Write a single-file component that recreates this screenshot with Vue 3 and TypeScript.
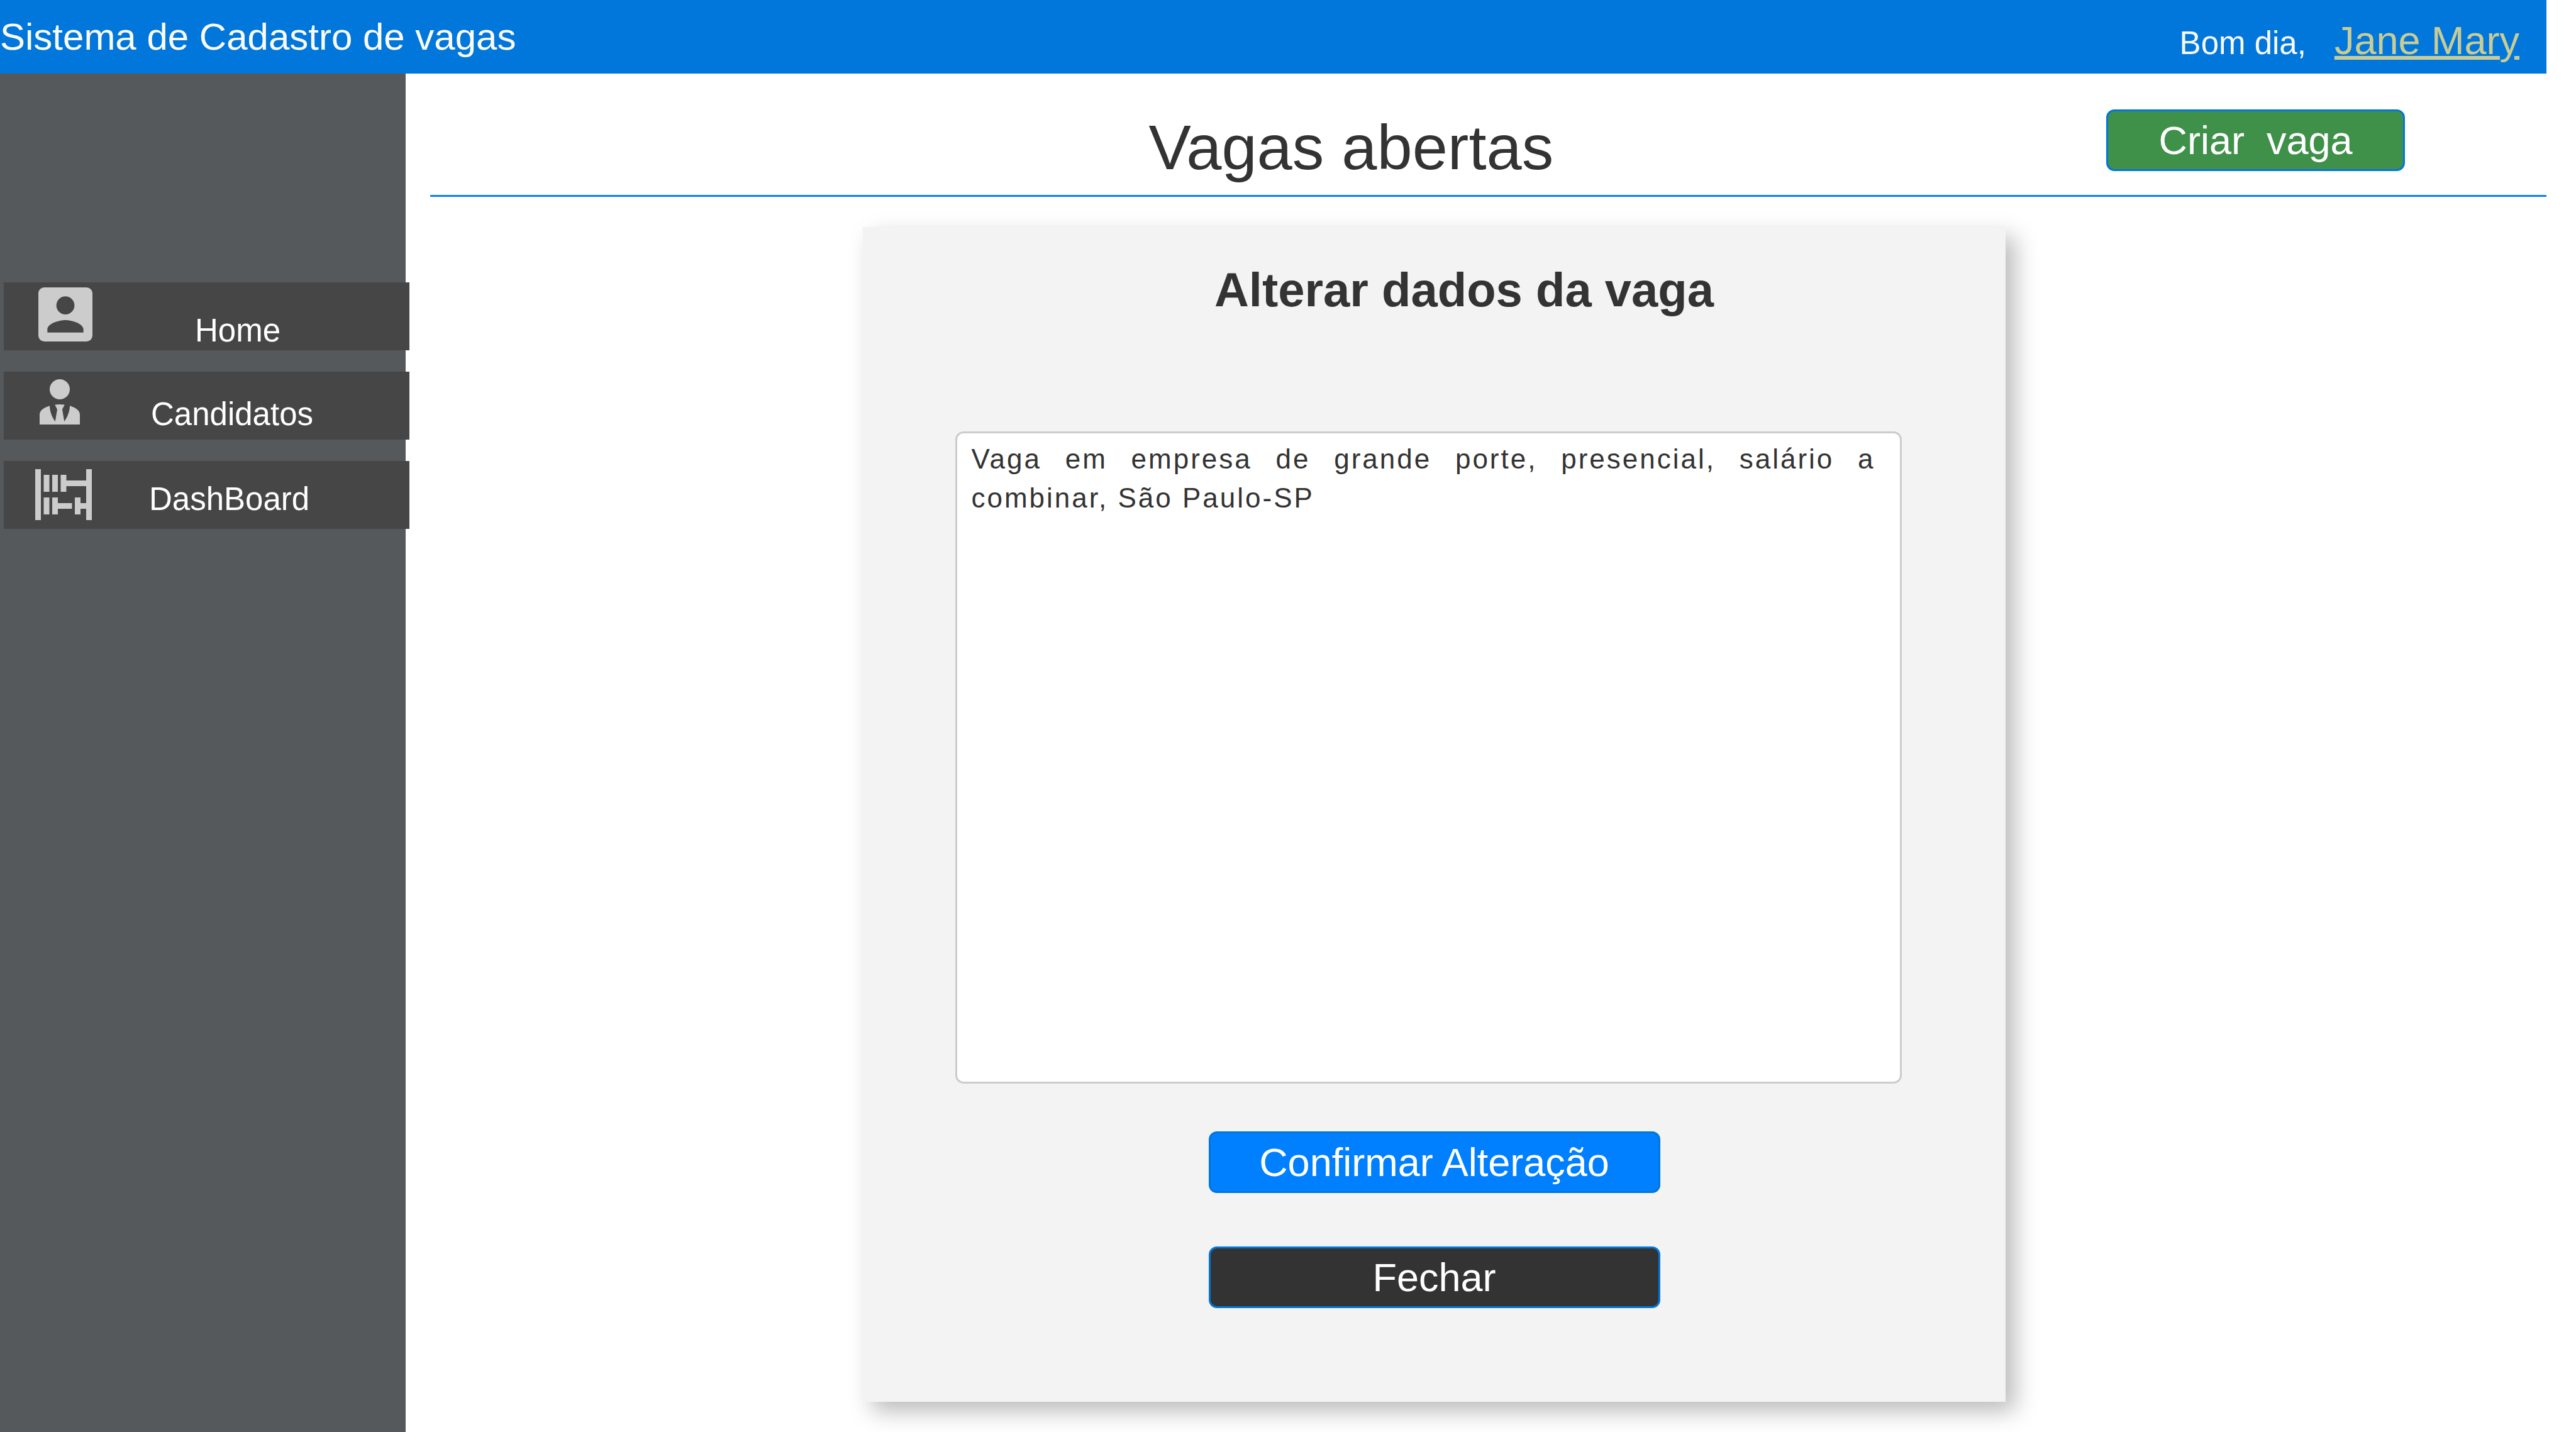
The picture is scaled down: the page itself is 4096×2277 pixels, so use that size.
<script setup lang="ts">
import { ref } from 'vue'

interface MenuItem {
  id: string
  label: string
  viewBox: string
  path: string
}

const menu: MenuItem[] = [
  {
    id: 'home',
    label: 'Home',
    viewBox: '3 3 18 18',
    path: 'M6,17C6,15 10,13.9 12,13.9C14,13.9 18,15 18,17V18H6M15,9A3,3 0 0,1 12,12A3,3 0 0,1 9,9A3,3 0 0,1 12,6A3,3 0 0,1 15,9M3,5V19A2,2 0 0,0 5,21H19A2,2 0 0,0 21,19V5A2,2 0 0,0 19,3H5C3.89,3 3,3.9 3,5Z',
  },
  {
    id: 'candidates',
    label: 'Candidatos',
    viewBox: '4 3 16 18',
    path: 'M12 3A4 4 0 0 1 16 7A4 4 0 0 1 12 11A4 4 0 0 1 8 7A4 4 0 0 1 12 3M16 13.54C16 14.6 15.72 17.07 13.81 19.83L13 15L13.94 13.12C13.32 13.05 12.67 13 12 13S10.68 13.05 10.06 13.12L11 15L10.19 19.83C8.28 17.07 8 14.6 8 13.54C5.61 14.24 4 15.5 4 17V21H20V17C20 15.5 18.4 14.24 16 13.54Z',
  },
  {
    id: 'dashboard',
    label: 'DashBoard',
    viewBox: '2 3 20 18',
    path: 'M2 3H4V21H2ZM20 3H22V21H20V17H18V19H16V13H18V15H20V9H13V11H11V5H13V7H20ZM5 5H7V11H5ZM8 5H10V11H8ZM5 13H7V19H5ZM8 13H10V15H15V17H10V19H8Z',
  },
]

const description = ref('Vaga em empresa de grande porte, presencial, salário a combinar, São Paulo-SP')
</script>

<template>
  <div class="page">
    <header class="topbar">
      <span class="brand">Sistema de Cadastro de vagas</span>
      <div class="user">
        <span class="greeting">Bom dia,</span>
        <a class="user-name" href="#perfil">Jane Mary</a>
      </div>
    </header>

    <div class="body">
      <nav class="sidebar">
        <a v-for="item in menu" :key="item.id" class="item" :class="item.id" :href="'#' + item.id">
          <svg class="icon" :viewBox="item.viewBox" aria-hidden="true"><path :d="item.path" /></svg>
          <span class="label">{{ item.label }}</span>
        </a>
      </nav>

      <main class="content">
        <div class="toolbar">
          <h1 class="title">Vagas abertas</h1>
          <button class="btn create" type="button">Criar&nbsp; vaga</button>
        </div>

        <div class="stage">
          <form class="card" @submit.prevent>
            <h2 class="card-title"><label for="description">Alterar dados da vaga</label></h2>
            <textarea id="description" v-model="description" class="field" spellcheck="false"></textarea>
            <button class="btn confirm" type="submit">Confirmar Alteração</button>
            <button class="btn close" type="button">Fechar</button>
          </form>
        </div>
      </main>
    </div>
  </div>
</template>

<style>
body {
  background: #fff;
}
</style>

<style scoped>
.page {
  box-sizing: border-box;
  display: flex;
  flex-direction: column;
  min-height: 100vh;
  padding-right: 47px;
  font-family: "Liberation Sans", Arial, sans-serif;
  color: #333;
}

.topbar {
  display: flex;
  align-items: center;
  justify-content: space-between;
  height: 117px;
  padding-right: 43px;
  background: #0176db;
}

.brand {
  font-size: 60px;
  line-height: 70px;
  color: #fbfbf5;
}

.user {
  display: flex;
  align-items: baseline;
  gap: 45px;
  padding-top: 11px;
}

.greeting {
  font-size: 51px;
  line-height: 58px;
  color: #f9f9fd;
}

.user-name {
  font-size: 63px;
  line-height: 72px;
  color: #c9cc94;
  text-decoration-thickness: 6px;
  text-underline-offset: 3px;
}

.body {
  display: flex;
  flex: 1;
}

.sidebar {
  box-sizing: border-box;
  display: flex;
  flex: none;
  flex-direction: column;
  gap: 34px;
  width: 645px;
  padding: 332px 0 0 6px;
  background: #55595c;
}

.item {
  box-sizing: border-box;
  display: flex;
  flex: none;
  align-items: flex-start;
  width: 645px;
  height: 108px;
  background: #464646;
  color: #fff;
  text-decoration: none;
}

.icon {
  flex: none;
  fill: #ccc;
}

.label {
  font-size: 51px;
  line-height: 58px;
}

.home {
  gap: 163px;
  padding: 8px 0 0 55px;
}

.home .icon {
  width: 86px;
  height: 86px;
}

.home .label {
  padding-top: 40px;
}

.candidates {
  gap: 113px;
  padding: 12px 0 0 57px;
}

.candidates .icon {
  width: 64px;
  height: 72px;
}

.candidates .label {
  padding-top: 27px;
}

.dashboard {
  gap: 91px;
  padding: 13px 0 0 50px;
}

.dashboard .icon {
  width: 90px;
  height: 81px;
}

.dashboard .label {
  padding-top: 19px;
}

.content {
  flex: 1;
  min-width: 0;
  padding-left: 39px;
}

.toolbar {
  display: grid;
  grid-template-columns: 13fr auto 10fr auto;
  align-items: start;
  padding: 57px 225px 16px 0;
  border-bottom: 3px solid #0080ff;
}

.title {
  grid-column: 2;
  margin: 0;
  font-size: 101px;
  line-height: 120px;
  font-weight: 400;
}

.btn {
  box-sizing: border-box;
  height: 98px;
  padding: 0;
  border: 3px solid #0176db;
  border-radius: 13px;
  font-family: inherit;
  font-size: 63px;
  line-height: 72px;
  color: #fff;
}

.create {
  grid-column: 4;
  width: 475px;
  background: #3f9149;
}

.stage {
  display: grid;
  grid-template-columns: 4fr 54% 5fr;
  padding: 48px 0 40px;
}

.card {
  box-sizing: border-box;
  grid-column: 2;
  display: flex;
  flex-direction: column;
  align-items: center;
  padding: 56px 0 149px;
  background: #f3f3f3;
  box-shadow: 15px 15px 34px rgba(0, 0, 0, 0.27);
}

.card-title {
  margin: 0;
  padding-left: 95px;
  font-size: 76px;
  line-height: 88px;
  font-weight: 700;
}

.field {
  box-sizing: border-box;
  width: 1505px;
  height: 1037px;
  margin: 181px 19px 76px 0;
  padding: 10px 39px 10px 23px;
  border: 3px solid #ccc;
  border-radius: 13px;
  background: #fff;
  font-family: inherit;
  font-size: 44px;
  line-height: 62px;
  letter-spacing: 3px;
  text-align: justify;
  color: #333;
  resize: none;
  outline: none;
}

.confirm,
.close {
  width: 718px;
}

.confirm {
  background: #0080ff;
}

.close {
  margin-top: 85px;
  background: #333;
}
</style>
